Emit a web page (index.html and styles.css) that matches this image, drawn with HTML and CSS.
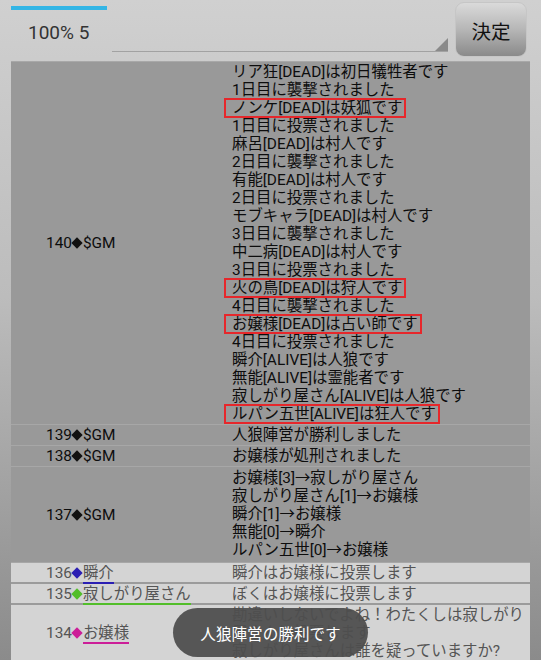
FILE: index.html
```html
<!DOCTYPE html>
<html lang="ja">
<head>
  <meta charset="UTF-8">
  <meta name="viewport" content="width=device-width, initial-scale=1.0">
  <title>人狼ログ</title>
  <link rel="stylesheet" href="styles.css">
</head>
<body>
  <div class="topbar">
    <div class="left">
      <div class="progress"></div>
      <div class="status">100% 5</div>
    </div>
    <div class="spinner">
      <svg width="13" height="13" viewBox="0 0 13 13"><polygon points="13,0 13,13 0,13" fill="#8a8a8a"/></svg>
    </div>
    <button class="decide">決定</button>
  </div>

  <div class="log">
    <div class="row gm">
      <div class="who">140<i class="dia"></i>$GM</div>
      <div class="msg">
        リア狂[DEAD]は初日犠牲者です<br>
        1日目に襲撃されました<br>
        <span class="mark">ノンケ[DEAD]は妖狐です</span><br>
        1日目に投票されました<br>
        麻呂[DEAD]は村人です<br>
        2日目に襲撃されました<br>
        有能[DEAD]は村人です<br>
        2日目に投票されました<br>
        モブキャラ[DEAD]は村人です<br>
        3日目に襲撃されました<br>
        中二病[DEAD]は村人です<br>
        3日目に投票されました<br>
        <span class="mark">火の鳥[DEAD]は狩人です</span><br>
        4日目に襲撃されました<br>
        <span class="mark">お嬢様[DEAD]は占い師です</span><br>
        4日目に投票されました<br>
        瞬介[ALIVE]は人狼です<br>
        無能[ALIVE]は霊能者です<br>
        寂しがり屋さん[ALIVE]は人狼です<br>
        <span class="mark">ルパン五世[ALIVE]は狂人です</span>
      </div>
    </div>
    <div class="row gm">
      <div class="who">139<i class="dia"></i>$GM</div>
      <div class="msg">人狼陣営が勝利しました</div>
    </div>
    <div class="row gm">
      <div class="who">138<i class="dia"></i>$GM</div>
      <div class="msg">お嬢様が処刑されました</div>
    </div>
    <div class="row gm tall">
      <div class="who">137<i class="dia"></i>$GM</div>
      <div class="msg">
        お嬢様[3]→寂しがり屋さん<br>
        寂しがり屋さん[1]→お嬢様<br>
        瞬介[1]→お嬢様<br>
        無能[0]→瞬介<br>
        ルパン五世[0]→お嬢様
      </div>
    </div>
    <div class="row pl">
      <div class="who">136<i class="dia blue"></i><span class="name blue">瞬介</span></div>
      <div class="msg">瞬介はお嬢様に投票します</div>
    </div>
    <div class="row pl">
      <div class="who">135<i class="dia green"></i><span class="name green">寂しがり屋さん</span></div>
      <div class="msg">ぼくはお嬢様に投票します</div>
    </div>
    <div class="row pl">
      <div class="who">134<i class="dia pink"></i><span class="name pink">お嬢様</span></div>
      <div class="msg">勘違いしないでよね！わたくしは寂しがり屋さんに投票します<br>寂しがり屋さんは誰を疑っていますか?</div>
    </div>
  </div>

  <div class="toast">人狼陣営の勝利です</div>
</body>
</html>
```

FILE: styles.css
```css
body {
  margin: 0;
  width: 541px;
  height: 660px;
  overflow: hidden;
  position: relative;
  font-family: Roboto, "Noto Sans CJK JP", sans-serif;
  background: linear-gradient(#d0d0d0 0%, #bcbcbc 45%, #8b8b8b 100%);
}

.topbar {
  display: flex;
  height: 60px;
  padding-left: 11px;
  box-sizing: border-box;
}

.left {
  width: 96px;
}

.progress {
  height: 4px;
  margin-top: 6px;
  background-color: #33b5e5;
}

.status {
  margin-top: 12px;
  padding-left: 17px;
  font-size: 19px;
  line-height: 22px;
  color: #333;
}

.spinner {
  margin-left: 5px;
  width: 336px;
  height: 51px;
  border-bottom: 1px solid #a2a2a2;
  display: flex;
  justify-content: flex-end;
  align-items: flex-end;
}

.spinner svg {
  display: block;
}

.decide {
  margin: 2px 0 0 7px;
  width: 72px;
  height: 55px;
  padding: 2px 0 0;
  border: 1px solid #c6c6c6;
  border-radius: 9px;
  background: linear-gradient(#dadada, #b6b6b6 50%, #8a8a8a);
  font-family: "Noto Sans CJK JP", sans-serif;
  font-size: 19.5px;
  color: #111;
}

.log {
  margin: 1px 11px 0;
  border-top: 1px solid #a8a8a8;
}

.row {
  display: grid;
  grid-template-columns: 216px 1fr;
  font-size: 15.4px;
  line-height: 18px;
}

.row.gm {
  background-color: #999;
  color: #0d0d0d;
  border-bottom: 1px solid #a7a7a7;
}

.row.pl {
  background-color: #d4d4d4;
  color: #555;
  border-bottom: 2px solid #9b9b9b;
}

.who {
  align-self: center;
  padding-left: 35px;
  white-space: nowrap;
}

.msg {
  padding: 1px 5px;
}

.row.tall .msg {
  padding: 2px 5px 3px;
}

.row.pl .msg {
  padding: 1px 5px 0;
}

.dia {
  display: inline-block;
  width: 8px;
  height: 8px;
  margin: 0 1.5px;
  vertical-align: 1px;
  background-color: #111;
  transform: rotate(45deg);
}

.dia.blue { background-color: #2b1fb3; }
.dia.green { background-color: #52be2a; }
.dia.pink { background-color: #cc1e98; }

.name {
  border-bottom: 2px solid;
}

.name.blue { border-color: #2b1fb3; }
.name.green { border-color: #52be2a; }
.name.pink { border-color: #cc1e98; }

.mark {
  position: relative;
}

.mark::after {
  content: "";
  position: absolute;
  left: -8px;
  right: -4px;
  top: -1px;
  bottom: -1px;
  border: 2px solid #e6272b;
}

.toast {
  position: absolute;
  left: 173px;
  top: 608px;
  width: 195px;
  height: 49px;
  border-radius: 25px;
  background-color: rgba(78, 78, 78, 0.94);
  color: #fff;
  font-size: 15.6px;
  display: flex;
  align-items: center;
  justify-content: center;
}
```
